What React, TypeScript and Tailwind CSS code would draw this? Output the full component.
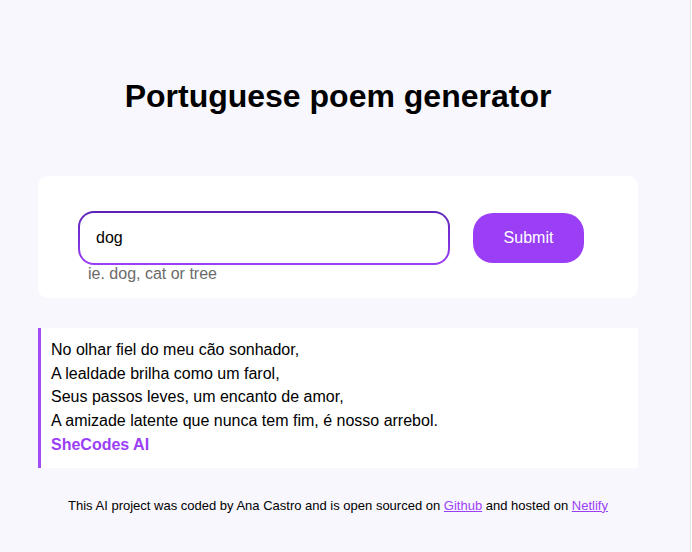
import React from 'react';

export default function App() {
  return (
    <div className="min-h-[552px] w-[691px] bg-[#f9f7fe] border-r border-[#e2e2e2] font-['Liberation_Sans',Arial,sans-serif] text-black">
      <div className="w-[600px] ml-[38px] pt-[77px]">
        <h1 className="text-center text-[32px] font-bold leading-[39px]">Portuguese poem generator</h1>

        <div className="mt-[60px] bg-white rounded-[10px] pt-[35px] pb-[15px] pl-[40px]">
          <form className="flex items-center gap-[23px]" onSubmit={(e) => e.preventDefault()}>
            <div className="w-[372px] h-[54px] rounded-[16px] p-[2px] bg-gradient-to-b from-[#5b21b6] to-[#9b3ff7]">
              <input
                defaultValue="dog"
                className="w-full h-full rounded-[14px] bg-white px-[16px] text-[16px] outline-none"
              />
            </div>
            <button className="w-[111px] h-[50px] rounded-[20px] bg-[#9b3ff7] text-white text-[16px]">Submit</button>
          </form>
          <div className="pl-[10px] text-[16px] leading-[18px] text-[#6b6b6b]">ie. dog, cat or tree</div>
        </div>

        <div className="mt-[30px] bg-white border-l-[3px] border-[#a24bf7] pl-[10px] pt-[10px] pb-[11px] text-[16px] leading-[23.7px]">
          <div>No olhar fiel do meu cão sonhador,</div>
          <div>A lealdade brilha como um farol,</div>
          <div>Seus passos leves, um encanto de amor,</div>
          <div>A amizade latente que nunca tem fim, é nosso arrebol.</div>
          <div className="font-bold text-[#9b3ff7]">SheCodes AI</div>
        </div>

        <footer className="mt-[28px] text-center text-[13px]">
          This AI project was coded by Ana Castro and is open sourced on{' '}
          <a href="#" className="underline text-[#9b3ff7]">Github</a> and hosted on{' '}
          <a href="#" className="underline text-[#9b3ff7]">Netlify</a>
        </footer>
      </div>
    </div>
  );
}
